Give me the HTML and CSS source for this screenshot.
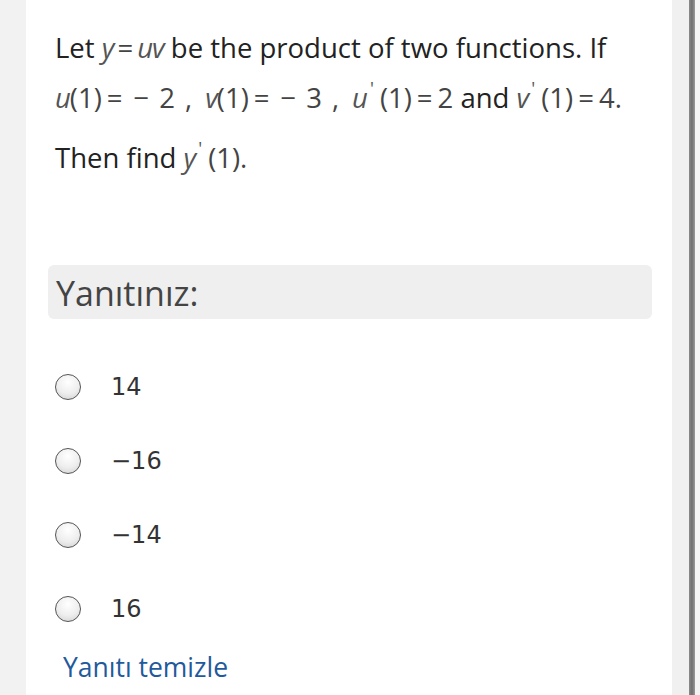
FILE: index.html
```html
<!DOCTYPE html>
<html>
<head>
<meta charset="utf-8">
<link rel="stylesheet" href="styles.css">
</head>
<body>
<div class="page">
  <div class="gutter-left"></div>
  <main class="card">
    <div class="question">
      <p class="qline">Let <span class="m">y</span><span class="mo">=</span><span class="m">uv</span> be the product of two functions. If</p>
      <p class="qline eq"><span class="m">u</span><span class="mn">(1)</span><span class="mo">=</span><span class="mn neg">−</span><span class="mn">2</span><span class="mn comma">,</span><span class="m">v</span><span class="mn">(1)</span><span class="mo">=</span><span class="mn neg">−</span><span class="mn">3</span><span class="mn comma">,</span><span class="m">u</span><sup class="pr">'</sup><span class="mn">(1)</span><span class="mo">=</span><span class="mn">2</span> and <span class="m">v</span><sup class="pr">'</sup><span class="mn">(1)</span><span class="mo">=</span><span class="mn">4.</span></p>
      <p class="qline last">Then find <span class="m">y</span><sup class="pr">'</sup><span class="mn">(1).</span></p>
    </div>
    <div class="answer-head">Yanıtınız:</div>
    <ul class="options">
      <li class="option"><span class="radio"></span><span class="opt-text">14</span></li>
      <li class="option"><span class="radio"></span><span class="opt-text">−16</span></li>
      <li class="option"><span class="radio"></span><span class="opt-text">−14</span></li>
      <li class="option"><span class="radio"></span><span class="opt-text">16</span></li>
    </ul>
    <a class="clear" href="#">Yanıtı temizle</a>
  </main>
  <div class="gutter-right"></div>
  <div class="divider"></div>
  <div class="edge"></div>
</div>
</body>
</html>
```

FILE: styles.css
```css
html, body {
  margin: 0;
  padding: 0;
  height: 100%;
  background: #f2f2f2;
}
.page {
  display: flex;
  height: 695px;
  overflow: hidden;
}
.gutter-left {
  width: 26px;
  flex: none;
  background: #f2f2f2;
}
.card {
  width: 646px;
  flex: none;
  background: #fff;
  padding: 0 20px 0 22px;
  box-sizing: border-box;
  font-family: "Open Sans", sans-serif;
  color: #333;
}
.gutter-right {
  width: 17px;
  flex: none;
  background: #f0f0f0;
}
.divider {
  width: 6px;
  flex: none;
  background: linear-gradient(to right, #8a8a8a, #6e6e6e, #9a9a9a);
}
.edge {
  flex: 1;
  background: #f4f4f4;
}
.question {
  padding: 23px 0 0 7px;
  font-size: 27.5px;
  color: #222;
}
.qline {
  margin: 0;
  line-height: 50px;
  white-space: nowrap;
}
.qline.last {
  margin-top: 10px;
}
.m {
  font-style: italic;
  color: #555;
  letter-spacing: -1px;
}
.mn, .mo {
  color: #444;
}
.mo {
  margin: 0 4px;
}
.eq .mo {
  margin: 0 5px;
}
.neg {
  margin: 0 10px 0 6px;
}
.comma {
  margin: 0 13px 0 10px;
}
.pr {
  font-size: 18px;
  vertical-align: 13px;
  line-height: 0;
  color: #555;
  margin: 0 6px 0 3px;
}
.answer-head {
  margin-top: 82px;
  height: 54px;
  background: #efefef;
  border-radius: 6px;
  font-size: 34px;
  color: #444;
  line-height: 56px;
  padding-left: 8px;
}
.options {
  list-style: none;
  margin: 0;
  padding: 31px 0 0 7px;
}
.option {
  display: flex;
  align-items: center;
  height: 74px;
}
.radio {
  width: 24px;
  height: 24px;
  border: 1px solid #555;
  border-radius: 50%;
  background: radial-gradient(circle at 50% 30%, #ffffff 0%, #eeeeee 55%, #cfcfcf 100%);
  flex: none;
}
.opt-text {
  margin-left: 30px;
  font-family: "DejaVu Sans", sans-serif;
  font-size: 24px;
  color: #333;
}
.clear {
  display: block;
  margin: 3px 0 0 15px;
  font-size: 26.5px;
  color: #1f5a9c;
  text-decoration: none;
}
```
